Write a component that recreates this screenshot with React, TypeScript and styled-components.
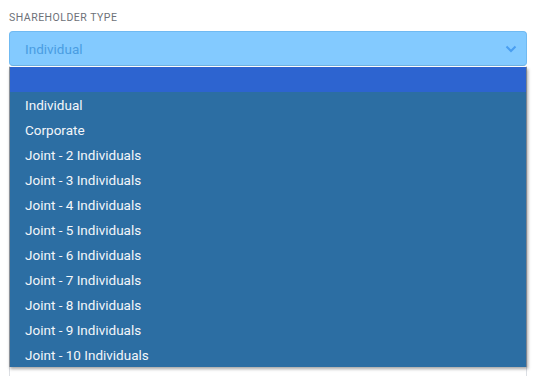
import React from "react";
import styled, { createGlobalStyle } from "styled-components";

const Global = createGlobalStyle`
  html, body {
    margin: 0;
    padding: 0;
    background: #ffffff;
    font-family: Roboto, "Liberation Sans", sans-serif;
  }
`;

const Page = styled.div`
  padding: 12px 11px 0 9px;
  width: 518px;
`;

const Label = styled.div`
  font-size: 10.5px;
  letter-spacing: 0.5px;
  color: #6d7178;
  line-height: 12px;
  margin-bottom: 7px;
`;

const Field = styled.div`
  position: relative;
`;

const SelectBox = styled.div`
  height: 35px;
  box-sizing: border-box;
  background: #83caff;
  border: 1px solid #70baf2;
  border-bottom-color: #6fb2e2;
  border-radius: 4px;
  display: flex;
  align-items: center;
  justify-content: space-between;
  padding: 1px 9px 0 15px;
  font-size: 13.5px;
  color: #4a9de2;
`;

const Chevron = styled.svg`
  width: 12px;
  height: 8px;
`;

const Panel = styled.div`
  height: 320px;
  border-left: 1px solid #dcdfe4;
  border-right: 1px solid #dcdfe4;
`;

const Menu = styled.ul`
  position: absolute;
  top: 36px;
  left: 0;
  right: 0;
  margin: 0;
  padding: 0;
  list-style: none;
  background: #2c6ea3;
  border-left: 1px solid #8a9098;
  border-right: 1px solid #7d8590;
  box-shadow: 1px 2px 3px rgba(0, 0, 0, 0.35);
`;

const Option = styled.li<{ $active?: boolean }>`
  height: 25px;
  line-height: 27px;
  padding-left: 15px;
  font-size: 13.5px;
  color: #f3f6fa;
  background: ${(p) => (p.$active ? "#2d64d0" : "transparent")};
  white-space: nowrap;
`;

const options = [
  "",
  "Individual",
  "Corporate",
  "Joint - 2 Individuals",
  "Joint - 3 Individuals",
  "Joint - 4 Individuals",
  "Joint - 5 Individuals",
  "Joint - 6 Individuals",
  "Joint - 7 Individuals",
  "Joint - 8 Individuals",
  "Joint - 9 Individuals",
  "Joint - 10 Individuals",
];

const App = () => {
  return (
    <>
      <Global />
      <Page>
        <Label>SHAREHOLDER TYPE</Label>
        <Field>
          <SelectBox>
            Individual
            <Chevron viewBox="0 0 12 8">
              <path d="M1.5 1.5 L6 6 L10.5 1.5" fill="none" stroke="#4a9ef0" strokeWidth="2" />
            </Chevron>
          </SelectBox>
          <Panel />
          <Menu>
            {options.map((o, i) => (
              <Option key={i} $active={i === 0}>
                {o}
              </Option>
            ))}
          </Menu>
        </Field>
      </Page>
    </>
  );
};

export default App;
